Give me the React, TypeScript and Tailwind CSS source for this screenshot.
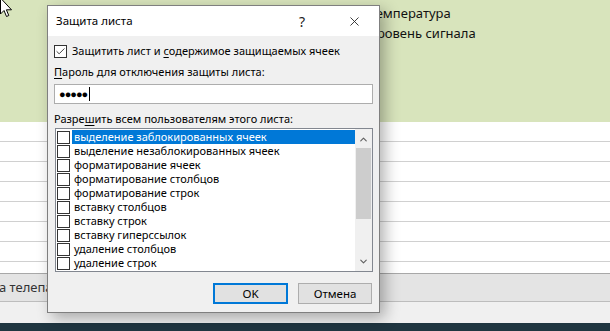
import { Check, ChevronDown, ChevronUp, X } from "lucide-react";

const perms = [
  "выделение заблокированных ячеек",
  "выделение незаблокированных ячеек",
  "форматирование ячеек",
  "форматирование столбцов",
  "форматирование строк",
  "вставку столбцов",
  "вставку строк",
  "вставку гиперссылок",
  "удаление столбцов",
  "удаление строк",
];

const ui = { fontFamily: '"Noto Sans", "Open Sans", sans-serif' };

const Box = ({ checked = false }: { checked?: boolean }) => (
  <span className="w-[13px] h-[13px] shrink-0 border border-[#333] bg-white flex items-center justify-center">
    {checked && <Check className="w-[11px] h-[11px] text-[#333]" strokeWidth={2} />}
  </span>
);

export default function App() {
  return (
    <div className="relative w-[610px] h-[331px] overflow-hidden bg-white" style={ui}>
      {/* Sheet behind the dialog */}
      <div className="h-[122px] bg-[#d8e4bc] pl-[369px] pt-[3px] text-[13px] text-[#111] leading-[20px]">
        <div>Температура</div>
        <div>Уровень сигнала</div>
      </div>
      <div>
        {Array.from({ length: 7 }).map((_, i) => (
          <div key={i} className="h-[20px] border-b border-[#d0d0d0]" />
        ))}
        <div className="h-[11px]" />
      </div>
      <div className="h-[29px] bg-[#e4e4e4] border-t border-[#a8a8a8] border-b border-b-[#bdbdbd] flex items-center text-[13px] text-[#333]">
        <span className="-ml-[1px]">а телепа</span>
      </div>
      <div className="h-[21px] bg-[#f0f0f0]" />
      <div className="h-[8px] bg-[#203641]" />

      {/* Mouse cursor */}
      <svg className="absolute left-0 top-0" width="14" height="20" viewBox="0 0 14 20">
        <path d="M0.5 -2 L0.5 14 L4 10.5 L6.5 16.5 L8.8 15.5 L6.4 9.8 L11.5 9.8 Z" fill="#fff" stroke="#000" strokeWidth="1" />
      </svg>

      {/* Protect sheet dialog */}
      <div className="absolute left-[47px] top-[5px] w-[333px] h-[308px] bg-[#f0f0f0] border border-[#7f7f7f] shadow-[5px_5px_14px_rgba(0,0,0,0.3)] flex flex-col text-[11px] text-black">
        <div className="h-[30px] bg-white flex items-center pl-[8px] shrink-0">
          <span className="text-[11.5px]">Защита листа</span>
          <span className="ml-auto mr-[42px] text-[14px] text-[#222]">?</span>
          <X className="w-[15px] h-[15px] mr-[17px] text-[#222]" strokeWidth={1.4} />
        </div>
        <div className="px-[6px] flex flex-col">
          <label className="mt-[8px] h-[14px] flex items-center gap-[5px]">
            <Box checked />
            <span>
              Защитить лист и <u className="underline-offset-2">с</u>одержимое защищаемых ячеек
            </span>
          </label>
          <div className="mt-[7px] h-[14px] leading-[14px]">
            <u className="underline-offset-2">П</u>ароль для отключения защиты листа:
          </div>
          <div className="mt-[5px] h-[20px] w-[319px] bg-white border border-[#adadad] flex items-center pl-[4px] text-[11px] tracking-[-1px]">
            ●●●●●<span className="ml-[2px] w-[1px] h-[14px] bg-black" />
          </div>
          <div className="mt-[8px] h-[14px] leading-[14px]">
            Разре<u className="underline-offset-2">ш</u>ить всем пользователям этого листа:
          </div>
          <div className="mt-[2px] ml-[1px] h-[144px] w-[318px] bg-white border border-[#828790] flex">
            <div className="flex-1 pt-[1px]">
              {perms.map((p, i) => (
                <div key={p} className="h-[14px] flex items-center pl-[1px]">
                  <Box />
                  <span
                    className={
                      "ml-[2px] h-[14px] leading-[14px] pl-[2px] flex-1 " +
                      (i === 0 ? "bg-[#0078d7] text-white" : "")
                    }
                  >
                    {p}
                  </span>
                </div>
              ))}
            </div>
            <div className="w-[17px] bg-[#f0f0f0] flex flex-col items-center">
              <ChevronUp className="w-[11px] h-[11px] mt-[5px] text-[#606060]" strokeWidth={2.5} />
              <div className="mt-[3px] w-[15px] h-[71px] bg-[#cdcdcd]" />
              <ChevronDown className="w-[11px] h-[11px] mt-auto mb-[4px] text-[#606060]" strokeWidth={2.5} />
            </div>
          </div>
          <div className="mt-[11px] flex justify-end gap-[10px] pr-[1px]">
            <button className="w-[75px] h-[21px] bg-[#e1e1e1] border-2 border-[#0078d7] text-[11.5px]">OK</button>
            <button className="w-[74px] h-[21px] bg-[#e1e1e1] border border-[#adadad] text-[11.5px]">Отмена</button>
          </div>
        </div>
      </div>
    </div>
  );
}
